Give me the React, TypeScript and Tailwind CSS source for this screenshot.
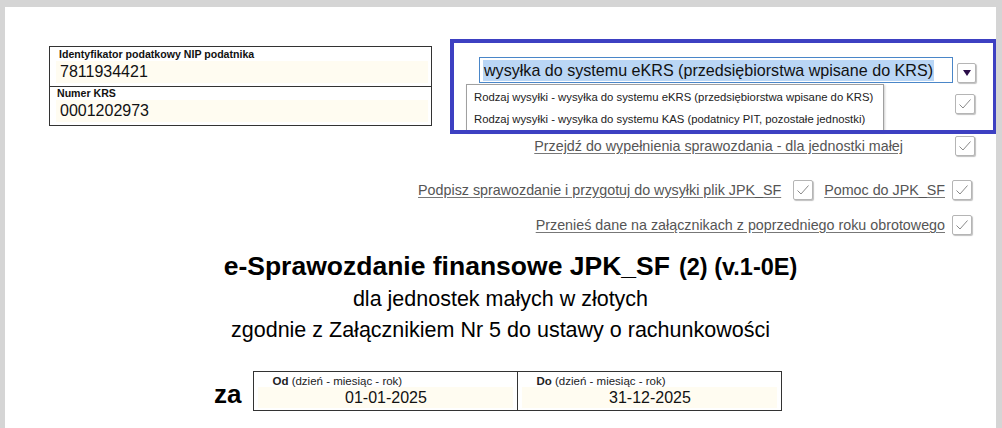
import type { ReactNode } from "react";

const font = { fontFamily: '"Liberation Sans", Arial, sans-serif' };

function CheckBox({ className = "" }: { className?: string }) {
  return (
    <div
      className={`flex h-[20px] w-[20px] shrink-0 items-center justify-center rounded-[2px] border border-[#b5b5b5] bg-white shadow-[1px_1px_1px_rgba(0,0,0,0.25)] ${className}`}
    >
      <svg width="14" height="12" viewBox="0 0 14 12" fill="none">
        <path d="M1.5 6.5 L5 10 L12.5 1.5" stroke="#8a8a8a" strokeWidth="1" />
      </svg>
    </div>
  );
}

function LinkText({ children }: { children: ReactNode }) {
  return (
    <span className="whitespace-nowrap text-[14.3px] leading-[20px] text-[#555] underline decoration-[#777] underline-offset-[2px]">
      {children}
    </span>
  );
}

function DateCell({ label, value, last }: { label: string; value: string; last?: boolean }) {
  return (
    <div className={`flex flex-1 flex-col ${last ? "" : "border-r border-[#333]"}`}>
      <div className="h-[15px] whitespace-nowrap pl-[18px] pt-[3px] text-[11.5px] leading-[12px] text-[#222]">
        <b>{label}</b> (dzień - miesiąc - rok)
      </div>
      <div className="mx-[4px] mb-[2px] flex-1 bg-[#fffcf1] pt-[1px] text-center text-[16px] leading-[20px] text-[#111]">
        {value}
      </div>
    </div>
  );
}

export default function App() {
  return (
    <div className="min-h-screen bg-[#d5d5d5] pl-[5px] pt-[7px]" style={font}>
      <div className="relative h-[421px] w-[991px] overflow-hidden bg-white">
        {/* top area */}
        <div className="flex pt-[39px]">
          <div className="ml-[44px] h-[80px] w-[383px] border border-[#333]">
            <div className="h-[40px] border-b border-[#333]">
              <div className="pl-[9px] pt-[1px] text-[10.6px] font-bold leading-[13px] text-[#111]">
                Identyfikator podatkowy NIP podatnika
              </div>
              <div className="mr-[3px] ml-[6px] bg-[#fffcf1] pl-[4px] text-[16px] leading-[22px] text-[#111]">
                7811934421
              </div>
            </div>
            <div className="h-[39px]">
              <div className="pl-[7px] text-[10.6px] font-bold leading-[13px] text-[#111]">Numer KRS</div>
              <div className="mr-[3px] ml-[6px] bg-[#fffcf1] pl-[4px] text-[16px] leading-[22px] text-[#111]">
                0001202973
              </div>
            </div>
          </div>
          <div className="ml-[47px] mt-[11px] flex flex-col">
            <div className="flex items-start">
              <div className="flex h-[26px] w-[474px] items-center border border-[#4a86c8] bg-white pl-[3px]">
                <span className="whitespace-nowrap bg-[#bad6f5] px-[1px] text-[16.1px] leading-[21px] text-[#111]">
                  wysyłka do systemu eKRS (przedsiębiorstwa wpisane do KRS)
                </span>
              </div>
              <div className="ml-[4px] mt-[6px] flex h-[20px] w-[19px] items-center justify-center rounded-[2px] border border-[#b5b5b5] bg-white shadow-[1px_1px_1px_rgba(0,0,0,0.25)]">
                <svg width="8" height="6" viewBox="0 0 8 6">
                  <path d="M0 0 H8 L4 6 Z" fill="#2b0d49" />
                </svg>
              </div>
            </div>
            <div className="mt-[11px] flex justify-end pr-[1px]">
              <CheckBox />
            </div>
          </div>
        </div>

        {/* action rows */}
        <div className="mt-[10px] flex items-center justify-end pr-[21px]">
          <LinkText>Przejdź do wypełnienia sprawozdania - dla jednostki małej</LinkText>
          <CheckBox className="ml-[52px]" />
        </div>
        <div className="mt-[22px] flex items-center justify-end pr-[24px]">
          <LinkText>Podpisz sprawozdanie i przygotuj do wysyłki plik JPK_SF</LinkText>
          <CheckBox className="ml-[12px]" />
          <span className="ml-[11px]">
            <LinkText>Pomoc do JPK_SF</LinkText>
          </span>
          <CheckBox className="ml-[7px]" />
        </div>
        <div className="mt-[13px] flex items-center justify-end pr-[24px]">
          <LinkText>Przenieś dane na załącznikach z poprzedniego roku obrotowego</LinkText>
          <CheckBox className="ml-[7px]" />
        </div>

        {/* heading */}
        <div className="mt-[16px] flex items-baseline justify-center whitespace-nowrap pl-[20px] text-black">
          <span className="text-[26.5px] font-bold leading-[30px]">e-Sprawozdanie finansowe JPK_SF</span>
          <span className="ml-[9px] text-[23.5px] font-bold leading-[30px]">(2) (v.1-0E)</span>
        </div>
        <div className="mt-[4px] text-center text-[21.5px] leading-[26px] text-black">dla jednostek małych w złotych</div>
        <div className="mt-[5px] text-center text-[21.5px] leading-[26px] text-black">
          zgodnie z Załącznikiem Nr 5 do ustawy o rachunkowości
        </div>

        {/* period */}
        <div className="mt-[28px] ml-[209px] flex items-center">
          <span className="pt-[6px] text-[26px] font-bold leading-[28px] text-black">za</span>
          <div className="ml-[12px] flex h-[40px] w-[529px] border border-[#333]">
            <DateCell label="Od" value="01-01-2025" />
            <DateCell label="Do" value="31-12-2025" last />
          </div>
        </div>

        {/* dropdown list */}
        <div className="absolute left-[461px] top-[77px] w-[418px] border border-[#a0a0a0] bg-white shadow-[1px_1px_2px_rgba(0,0,0,0.2)]">
          <div className="whitespace-nowrap px-[7px] pt-[4px] text-[11.3px] leading-[16px] text-[#222]">
            Rodzaj wysyłki - wysyłka do systemu eKRS (przedsiębiorstwa wpisane do KRS)
          </div>
          <div className="whitespace-nowrap px-[7px] pt-[6px] pb-[4px] text-[11.3px] leading-[16px] text-[#222]">
            Rodzaj wysyłki - wysyłka do systemu KAS (podatnicy PIT, pozostałe jednostki)
          </div>
        </div>

        {/* highlight frame */}
        <div className="pointer-events-none absolute left-[445px] top-[32px] h-[95px] w-[547px] border-[4px] border-[#3d40c2]" />
      </div>
    </div>
  );
}
